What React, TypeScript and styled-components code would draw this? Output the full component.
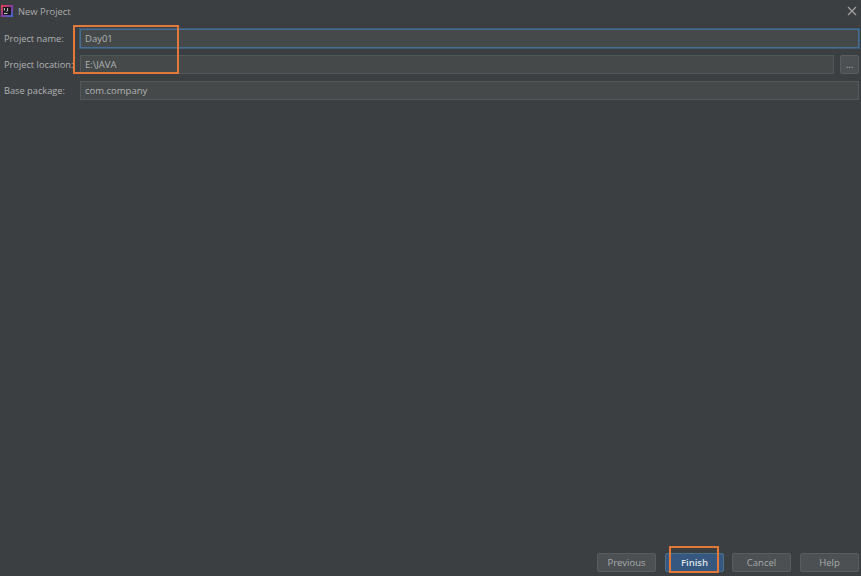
import React from "react";
import styled, { createGlobalStyle } from "styled-components";

const Global = createGlobalStyle`
  html, body { margin: 0; padding: 0; background: #3c3f41; }
  #root { width: 861px; height: 576px; }
`;

const Dialog = styled.div`
  position: relative;
  width: 861px;
  height: 576px;
  display: flex;
  flex-direction: column;
  background: #3c3f41;
  color: #bbbbbb;
  font-family: "Open Sans", "Noto Sans", sans-serif;
  font-size: 9.5px;
  overflow: hidden;
`;

const TitleBar = styled.header`
  height: 22px;
  display: flex;
  align-items: center;
  padding: 0 4px 0 1px;
  gap: 5px;
  flex: none;
`;

const Title = styled.span`
  flex: 1;
  color: #a9abad;
  font-size: 9.4px;
`;

const Form = styled.div`
  display: flex;
  flex-direction: column;
  padding: 7px 2px 0 4px;
  gap: 7px;
  flex: none;
`;

const Row = styled.div`
  display: flex;
  align-items: center;
  height: 19px;
  gap: 5px;
`;

const Label = styled.label`
  width: 71px;
  flex: none;
  color: #b0b2b4;
  font-size: 9.25px;
  white-space: nowrap;
`;

const Field = styled.div<{ $focused?: boolean }>`
  flex: 1;
  height: 19px;
  box-sizing: border-box;
  display: flex;
  align-items: center;
  padding-left: 4px;
  background: #45494a;
  color: #b0b2b4;
  border: 1px solid ${(p) => (p.$focused ? "#466d94" : "#55585a")};
  box-shadow: ${(p) => (p.$focused ? "0 0 0 1px #3f5a72" : "none")};
`;

const BrowseButton = styled.div`
  width: 19px;
  height: 19px;
  box-sizing: border-box;
  flex: none;
  margin-left: 1px;
  display: flex;
  align-items: center;
  justify-content: center;
  background: #4c5052;
  border: 1px solid #5a5c5e;
  border-radius: 2px;
  color: #bbbbbb;
  font-size: 9px;
  line-height: 1;
`;

const Spacer = styled.div`
  flex: 1;
`;

const Footer = styled.footer`
  flex: none;
  display: flex;
  justify-content: flex-end;
  gap: 9px;
  padding: 0 2px 4px 0;
`;

const Button = styled.div<{ $primary?: boolean }>`
  width: 59px;
  height: 19px;
  box-sizing: border-box;
  display: flex;
  align-items: center;
  justify-content: center;
  border-radius: 2px;
  margin-right: ${(p) => (p.$primary ? "-1px" : "0")};
  background: ${(p) => (p.$primary ? "#365880" : "#4c5052")};
  border: 1px solid ${(p) => (p.$primary ? "#4c708c" : "#5a5c5e")};
  color: ${(p) => (p.$primary ? "#dfe1e5" : "#a8aaac")};
  font-weight: ${(p) => (p.$primary ? 600 : 400)};
`;

const Callout = styled.div<{ $x: number; $y: number; $w: number; $h: number }>`
  position: absolute;
  left: ${(p) => p.$x}px;
  top: ${(p) => p.$y}px;
  width: ${(p) => p.$w}px;
  height: ${(p) => p.$h}px;
  box-sizing: border-box;
  border: 2px solid #e0793a;
  pointer-events: none;
`;

const AppIcon = () => (
  <svg width="12" height="12" viewBox="0 0 12 12" aria-hidden="true">
    <defs>
      <linearGradient id="ij" x1="0" y1="0" x2="1" y2="1">
        <stop offset="0" stopColor="#e8403a" />
        <stop offset="0.5" stopColor="#8a3a9c" />
        <stop offset="1" stopColor="#3a6fd8" />
      </linearGradient>
    </defs>
    <rect width="12" height="12" fill="url(#ij)" />
    <rect x="2" y="2" width="8" height="8" fill="#1a1a1e" />
    <path d="M3.4 3.2v2.2M6.6 3.2v2.2c0 .7-.5 1-1.1 1" stroke="#f2f2f2" strokeWidth="0.9" fill="none" />
    <rect x="3" y="8" width="3.4" height="0.8" fill="#f2f2f2" />
  </svg>
);

const CloseIcon = () => (
  <svg width="10" height="10" viewBox="0 0 10 10" aria-hidden="true">
    <path d="M1 1l8 8M9 1l-8 8" stroke="#a4a6a8" strokeWidth="1.1" />
  </svg>
);

export default function App() {
  return (
    <Dialog>
      <Global />
      <TitleBar>
        <AppIcon />
        <Title>New Project</Title>
        <CloseIcon />
      </TitleBar>
      <Form>
        <Row>
          <Label>Project name:</Label>
          <Field $focused>Day01</Field>
        </Row>
        <Row>
          <Label>Project location:</Label>
          <Field>E:\JAVA</Field>
          <BrowseButton>...</BrowseButton>
        </Row>
        <Row>
          <Label>Base package:</Label>
          <Field>com.company</Field>
        </Row>
      </Form>
      <Spacer />
      <Footer>
        <Button>Previous</Button>
        <Button $primary>Finish</Button>
        <Button>Cancel</Button>
        <Button>Help</Button>
      </Footer>
      <Callout $x={73} $y={25} $w={106} $h={49} />
      <Callout $x={669} $y={546} $w={50} $h={27} />
    </Dialog>
  );
}
